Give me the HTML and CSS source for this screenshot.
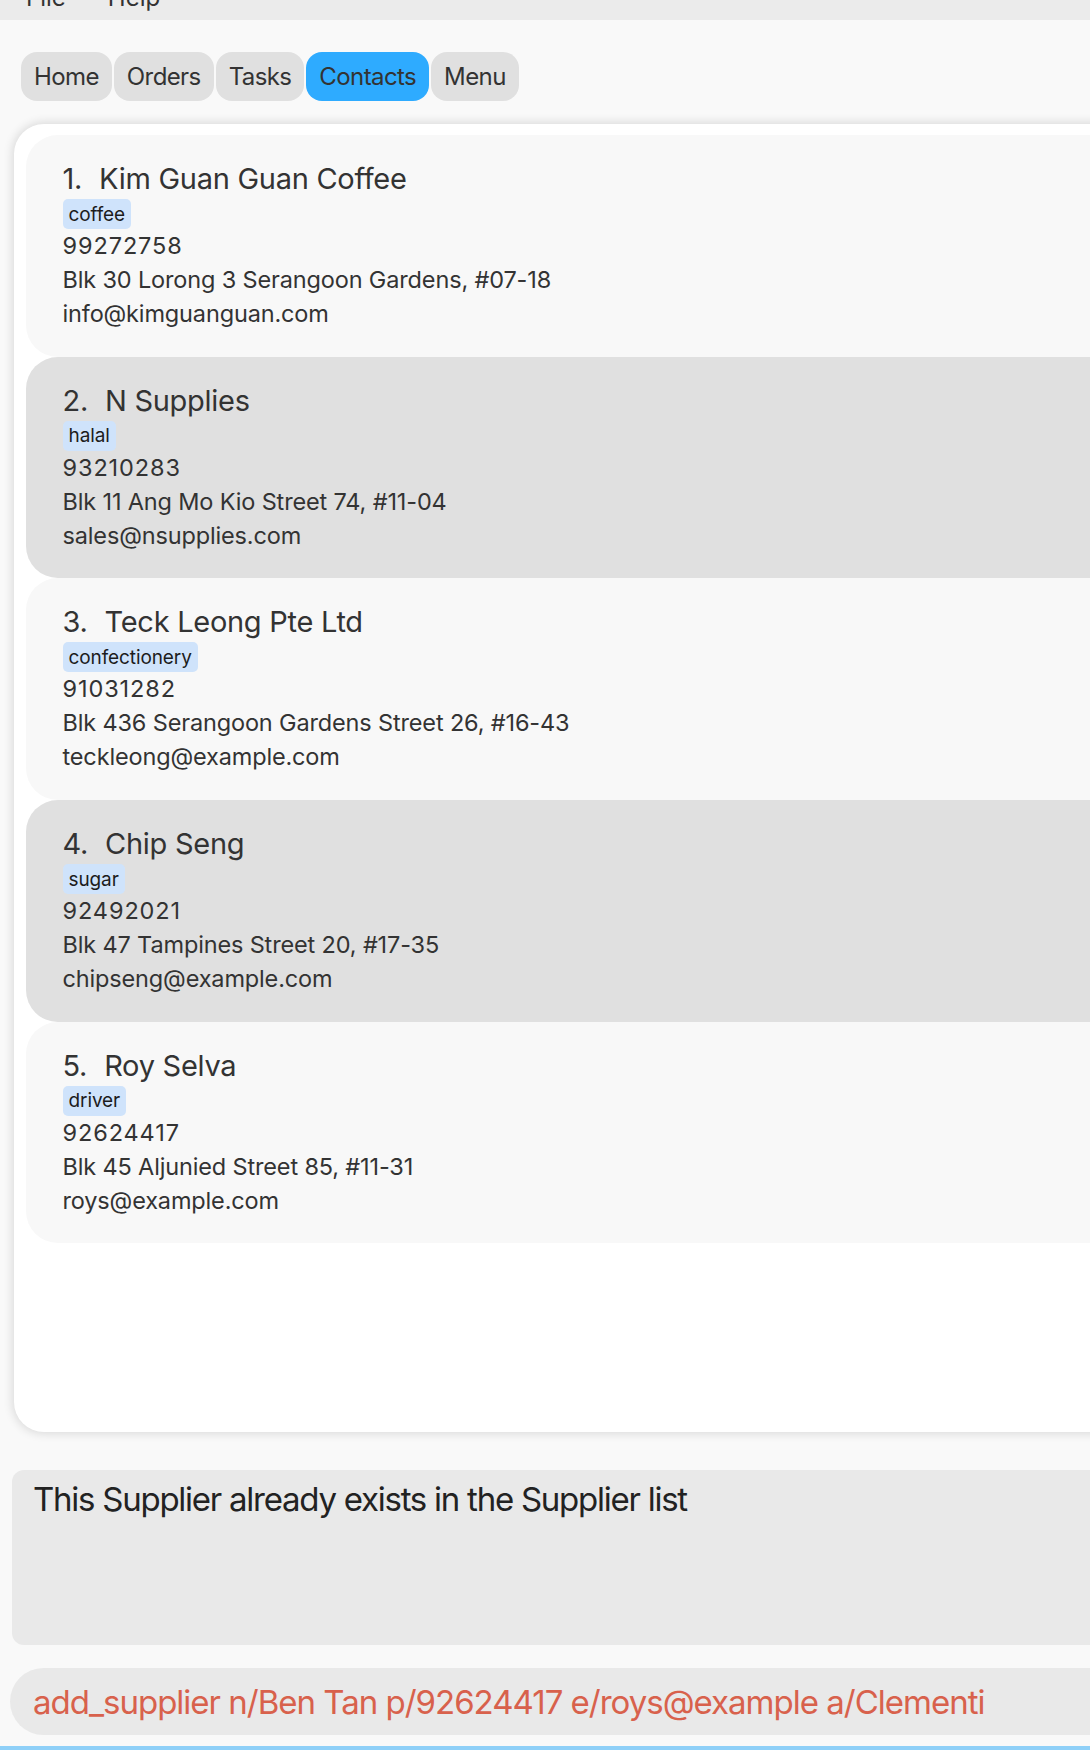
FILE: index.html
```html
<!DOCTYPE html>
<html lang="en">
<head>
<meta charset="utf-8">
<title>Contacts</title>
<link rel="stylesheet" href="styles.css">
</head>
<body>
<div class="app">
  <div class="menubar">
    <div class="menu-row">
      <span class="menu-item">File</span>
      <span class="menu-item">Help</span>
    </div>
  </div>

  <nav class="tabs">
    <span class="tab">Home</span>
    <span class="tab">Orders</span>
    <span class="tab">Tasks</span>
    <span class="tab tab-active">Contacts</span>
    <span class="tab">Menu</span>
  </nav>

  <section class="panel">
    <div class="card card-light">
      <div class="title"><span class="idx">1.</span><span class="name">Kim Guan Guan Coffee</span></div>
      <div class="tags"><span class="tag">coffee</span></div>
      <div class="line phone">99272758</div>
      <div class="line">Blk 30 Lorong 3 Serangoon Gardens, #07-18</div>
      <div class="line">info@kimguanguan.com</div>
    </div>
    <div class="card card-dark">
      <div class="title"><span class="idx">2.</span><span class="name">N Supplies</span></div>
      <div class="tags"><span class="tag">halal</span></div>
      <div class="line phone">93210283</div>
      <div class="line">Blk 11 Ang Mo Kio Street 74, #11-04</div>
      <div class="line">sales@nsupplies.com</div>
    </div>
    <div class="card card-light">
      <div class="title"><span class="idx">3.</span><span class="name">Teck Leong Pte Ltd</span></div>
      <div class="tags"><span class="tag">confectionery</span></div>
      <div class="line phone">91031282</div>
      <div class="line">Blk 436 Serangoon Gardens Street 26, #16-43</div>
      <div class="line">teckleong@example.com</div>
    </div>
    <div class="card card-dark">
      <div class="title"><span class="idx">4.</span><span class="name">Chip Seng</span></div>
      <div class="tags"><span class="tag">sugar</span></div>
      <div class="line phone">92492021</div>
      <div class="line">Blk 47 Tampines Street 20, #17-35</div>
      <div class="line">chipseng@example.com</div>
    </div>
    <div class="card card-light">
      <div class="title"><span class="idx">5.</span><span class="name">Roy Selva</span></div>
      <div class="tags"><span class="tag">driver</span></div>
      <div class="line phone">92624417</div>
      <div class="line">Blk 45 Aljunied Street 85, #11-31</div>
      <div class="line">roys@example.com</div>
    </div>
  </section>

  <div class="status">This Supplier already exists in the Supplier list</div>

  <div class="command">add_supplier n/Ben Tan p/92624417 e/roys@example a/Clementi</div>

  <div class="bottom-bar"></div>
</div>
</body>
</html>
```

FILE: styles.css
```css
html, body {
  margin: 0;
  padding: 0;
  overflow: hidden;
}

body {
  background: #f9f9f9;
  font-family: "Inter", "Noto Sans", sans-serif;
  color: #333333;
}

.app {
  width: 1090px;
  height: 1750px;
  overflow: hidden;
  display: flex;
  flex-direction: column;
}

.menubar {
  height: 20px;
  flex: none;
  background: #ebebeb;
  overflow: hidden;
}

.menu-row {
  display: flex;
  margin-top: -17px;
  padding-left: 26px;
  gap: 42px;
  font-size: 24px;
  line-height: 30px;
  color: #333;
}

.tabs {
  flex: none;
  display: flex;
  gap: 2px;
  padding: 32px 0 0 21px;
}

.tab {
  height: 49px;
  display: flex;
  align-items: center;
  padding: 0 13px;
  border-radius: 16px;
  background: #e0e0e0;
  font-size: 24px;
  letter-spacing: -0.6px;
  color: #333;
}

.tab-active {
  background: #2eabff;
}

.panel {
  flex: none;
  margin: 23px -60px 0 14px;
  height: 1308px;
  box-sizing: border-box;
  padding: 11px 0 0 11.5px;
  background: #ffffff;
  border-radius: 30px;
  box-shadow: 0 0 10px 2px rgba(0, 0, 0, 0.12);
}

.card {
  box-sizing: border-box;
  height: 221.7px;
  padding: 23px 0 0 37px;
  border-radius: 32px 0 0 32px;
}

.card-light { background: #f8f8f8; }
.card-dark { background: #e0e0e0; }

.title {
  height: 41px;
  display: flex;
  align-items: center;
  font-size: 29px;
  letter-spacing: -0.28px;
  color: #333;
}

.idx {
  margin-right: 17px;
}

.tags {
  height: 30px;
  display: flex;
}

.tag {
  display: flex;
  align-items: center;
  padding: 0 6px;
  height: 30px;
  box-sizing: border-box;
  background: #cfe3fb;
  border-radius: 5px;
  font-size: 19px;
  letter-spacing: -0.1px;
  color: #1c1c1c;
}

.line {
  height: 34px;
  line-height: 34px;
  font-size: 23.5px;
  letter-spacing: -0.15px;
  color: #333;
}

.line.phone {
  letter-spacing: 0.9px;
}

.status {
  flex: none;
  margin: 38px -40px 0 12px;
  height: 175px;
  box-sizing: border-box;
  padding: 9px 0 0 21px;
  background: #e9e9e9;
  border-radius: 12px;
  font-size: 33px;
  line-height: 40px;
  letter-spacing: -1.25px;
  color: #222;
}

.command {
  flex: none;
  margin: 23px -40px 0 10px;
  height: 67px;
  box-sizing: border-box;
  padding-left: 23px;
  display: flex;
  align-items: center;
  background: #e9e9e9;
  border-radius: 34px;
  font-size: 33px;
  letter-spacing: -1.0px;
  color: #d8614c;
}

.bottom-bar {
  flex: none;
  margin-top: 11px;
  height: 4px;
  background: #8fd0f8;
}
```
